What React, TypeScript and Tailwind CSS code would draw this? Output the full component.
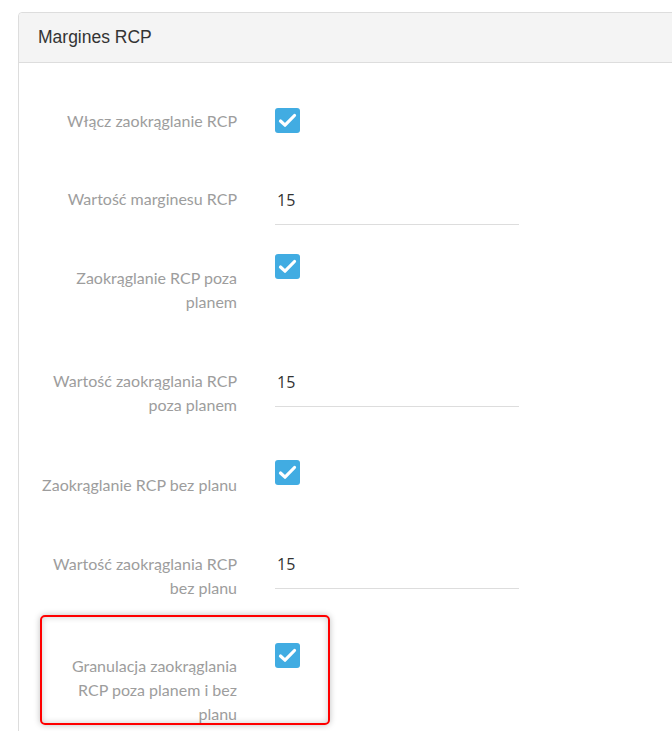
import React from "react";

type Row = {
  lines: string[];
  kind: "check" | "input";
  value?: string;
  h: number;
  labelTop: number;
  ctrlTop: number;
};

const rows: Row[] = [
  { lines: ["Włącz zaokrąglanie RCP"], kind: "check", h: 79, labelTop: 1, ctrlTop: 0 },
  { lines: ["Wartość marginesu RCP"], kind: "input", value: "15", h: 67, labelTop: 0, ctrlTop: 1 },
  { lines: ["Zaokrąglanie RCP poza", "planem"], kind: "check", h: 115, labelTop: 12, ctrlTop: 0 },
  { lines: ["Wartość zaokrąglania RCP", "poza planem"], kind: "input", value: "15", h: 91, labelTop: 0, ctrlTop: 1 },
  { lines: ["Zaokrąglanie RCP bez planu"], kind: "check", h: 92, labelTop: 13, ctrlTop: 0 },
  { lines: ["Wartość zaokrąglania RCP", "bez planu"], kind: "input", value: "15", h: 91, labelTop: 0, ctrlTop: 0 },
  { lines: ["Granulacja zaokrąglania", "RCP poza planem i bez", "planu"], kind: "check", h: 100, labelTop: 11, ctrlTop: 0 },
];

function Check() {
  return (
    <div className="w-[25px] h-[25px] rounded-[3px] bg-[#41ace2] flex items-center justify-center">
      <svg width="25" height="25" viewBox="0 0 25 25" fill="none">
        <path d="M5.5 13 L10 17.2 L19.5 7.5" stroke="#ffffff" strokeWidth="3.2" strokeLinecap="round" strokeLinejoin="round" />
      </svg>
    </div>
  );
}

function Input({ value }: { value: string }) {
  return (
    <div className="w-[244px] border-b border-[#dddddd] pb-3">
      <div className="pl-[2px] leading-6 text-[16px] text-[#333333] [font-family:'Open_Sans','Noto_Sans',sans-serif]">
        {value}
      </div>
    </div>
  );
}

export default function App() {
  return (
    <div className="relative w-[672px] h-[731px] overflow-hidden bg-white">
      <div className="pt-[12px] pl-[18px]">
        <div className="w-[720px] h-[760px] border border-[#dddddd] rounded-tl-[4px] bg-white">
          <div className="h-[50px] bg-[#f4f4f4] border-b border-[#dddddd] rounded-tl-[4px] flex items-center pl-[19px]">
            <span className="text-[17.5px] text-[#333333] [font-family:'Liberation_Sans',Arial,sans-serif]">
              Margines RCP
            </span>
          </div>
          <div className="pt-[45px]">
            {rows.map((r, i) => (
              <div key={i} className="flex items-start" style={{ height: r.h }}>
                <div
                  className="w-[218px] text-right text-[16px] leading-6 text-[#9d9d9d] [font-family:Lato,'Noto_Sans',sans-serif]"
                  style={{ marginTop: r.labelTop }}
                >
                  {r.lines.map((l, j) => (
                    <div key={j} className="whitespace-nowrap">
                      {l}
                    </div>
                  ))}
                </div>
                <div className="ml-[38px]" style={{ marginTop: r.ctrlTop }}>
                  {r.kind === "check" ? <Check /> : <Input value={r.value || ""} />}
                </div>
              </div>
            ))}
          </div>
        </div>
      </div>
      <div className="absolute left-[40px] top-[615px] w-[290px] h-[110px] border-2 border-[#ff0000] rounded-[5px] shadow-[0_0_6px_rgba(0,0,0,0.25),inset_0_0_6px_rgba(0,0,0,0.2)]" />
    </div>
  );
}
